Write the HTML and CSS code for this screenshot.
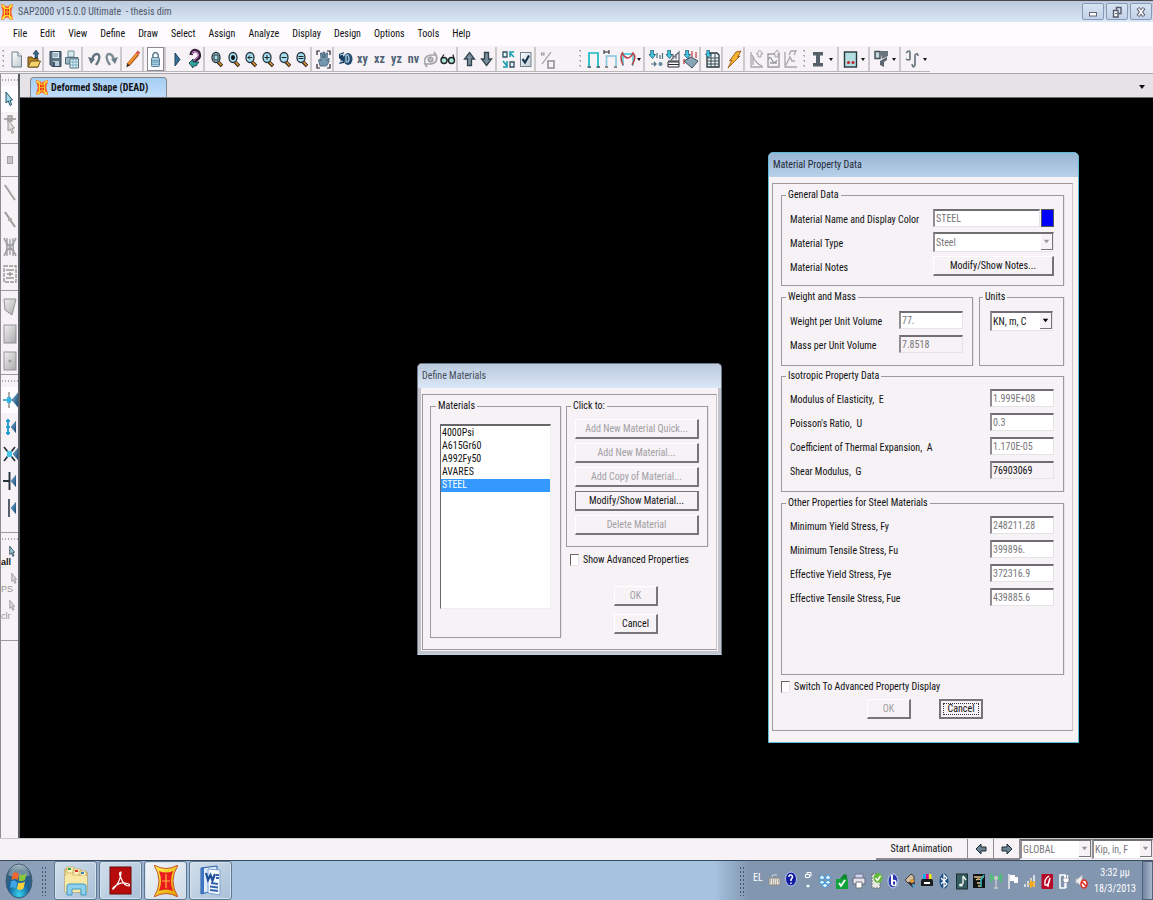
FILE: index.html
```html
<!DOCTYPE html>
<html lang="en">
<head>
<meta charset="utf-8">
<title>SAP2000 v15.0.0 Ultimate - thesis dim</title>
<link rel="stylesheet" href="styles.css">
</head>
<body>
<svg class="defs" aria-hidden="true">
  <defs>
    <linearGradient id="paper" x1="0" y1="0" x2="1" y2="1"><stop offset="0" stop-color="#fff"/><stop offset="1" stop-color="#bcc9cf"/></linearGradient>
    <linearGradient id="blue" x1="0" y1="0" x2="1" y2="1"><stop offset="0" stop-color="#7cb8dc"/><stop offset="1" stop-color="#12446f"/></linearGradient>
    <linearGradient id="grey" x1="0" y1="0" x2="1" y2="1"><stop offset="0" stop-color="#f0eff0"/><stop offset="1" stop-color="#a9a9ab"/></linearGradient>
    <radialGradient id="orb" cx=".5" cy=".9" r=".9"><stop offset="0" stop-color="#35d3f0"/><stop offset=".45" stop-color="#17639a"/><stop offset=".8" stop-color="#3c6079"/><stop offset="1" stop-color="#c5d5dd"/></radialGradient>
    <linearGradient id="gold" x1="0" y1="0" x2="1" y2="1"><stop offset="0" stop-color="#fff74a"/><stop offset="1" stop-color="#e39a00"/></linearGradient>
  </defs>
  <symbol id="sap" viewBox="0 0 24 32" preserveAspectRatio="none">
    <path d="M0 0 Q12 7 24 0 Q14 16 24 32 Q12 25 0 32 Q10 16 0 0Z" fill="url(#gold)" stroke="#c7542a" stroke-width="1"/>
    <path d="M5 6 Q12 9 19 6 Q15 16 19 26 Q12 23 5 26 Q9 16 5 6Z" fill="#e81b1f"/>
    <path d="M12 9V23M8 16H16" stroke="#fdb53e" stroke-width="1.2"/>
  </symbol>
  <symbol id="sap-small" viewBox="0 0 12 16" preserveAspectRatio="none">
    <path d="M0 0L3 1L6 3L9 1L12 0L11 4L10 8L11 12L12 16L9 15L6 13L3 15L0 16L1 12L2 8L1 4Z" fill="#ff5a2c" stroke="#ee7a38" stroke-width=".6"/>
    <path d="M1 1L4 4M11 1L8 4M1 15L4 12M11 15L8 12" stroke="#ffe63a" stroke-width="1.8"/>
    <path d="M3 4H9V12H3Z" fill="#ffd426"/>
    <path d="M4 5H8V11H4Z" fill="#ee2a1a"/>
    <path d="M6 5V11M4 8H8" stroke="#ffc52e" stroke-width=".8"/>
  </symbol>
  <symbol id="mag" viewBox="0 0 17 22">
    <path d="M10 14L14 18" stroke="#20201c" stroke-width="3.4"/><path d="M10.500 14L13.500 17.500" stroke="#e5932c" stroke-width="1.6"/>
    <ellipse cx="8" cy="9.500" rx="4" ry="5" fill="#a5dff0" stroke="#26323d" stroke-width="1.3"/>
  </symbol>
  <symbol id="cur" viewBox="0 0 8 16"><path d="M1 1V12L3.300 10L5 14.500L6.700 13.500L5 9.500L7.500 9Z"/></symbol>
  <symbol id="tri" viewBox="0 0 6 14"><path d="M6 0V14L0 7Z" fill="url(#blue)" stroke="#26567f" stroke-width=".6"/></symbol>
  <symbol id="load" viewBox="0 0 8 10"><path d="M2 0H5V5H7.500L4 9.500L0 5H2Z" fill="#45d0ee" stroke="#174c61" stroke-width=".9"/></symbol>
</svg>

<header class="titlebar">
  <svg class="app-icon"><use href="#sap-small"/></svg>
  <h1>SAP2000 v15.0.0 Ultimate &nbsp;- thesis dim</h1>
  <div class="win-buttons">
    <button aria-label="Minimize"><svg viewBox="0 0 20 14"><rect x="6.500" y="7.500" width="7" height="3.500" fill="#fff" stroke="#64687a"/></svg></button>
    <button aria-label="Restore"><svg viewBox="0 0 20 14"><path d="M9.500 2.500H14V8.500H9.500Z" fill="#dfe5ef" stroke="#555a6b" stroke-width="1.400"/><path d="M6.500 5.500H11V12H6.500Z" fill="#fff" stroke="#555a6b" stroke-width="1.400"/><path d="M8 8.500H10" stroke="#555a6b"/></svg></button>
    <button aria-label="Close"><svg viewBox="0 0 20 14"><path d="M7 3L13 11M13 3L7 11" stroke="#555a6b" stroke-width="3.600"/><path d="M7.500 3.500L12.500 10.500M12.500 3.500L7.500 10.500" stroke="#fff" stroke-width="1.600"/></svg></button>
  </div>
</header>

<nav class="menubar">
  <button>File</button><button>Edit</button><button>View</button><button>Define</button><button>Draw</button><button>Select</button><button>Assign</button><button>Analyze</button><button>Display</button><button>Design</button><button>Options</button><button>Tools</button><button>Help</button>
</nav>

<div class="toolbars">
  <div class="toolbar main-tools" role="toolbar" aria-label="Main">
    <i class="grip"></i>
    <button aria-label="New"><svg viewBox="0 0 17 22"><path d="M4 4H10L13.500 8V19H4Z" fill="url(#paper)" stroke="#6d7f8a"/><path d="M10 4V8H13.500" fill="#fff" stroke="#6d7f8a"/></svg></button>
    <button aria-label="Open"><svg viewBox="0 0 17 22"><path d="M3 19V9H7L8 10.500H13V19Z" fill="#b98422" stroke="#5b4312"/><path d="M3 19L6 13H15.500L13 19Z" fill="#f5d56b" stroke="#6e521a"/><path d="M10 10V6H8L11 2L14 6H12.500V10Z" fill="#35698c" stroke="#173349" stroke-width=".6"/></svg></button>
    <i class="sep"></i>
    <button aria-label="Save"><svg viewBox="0 0 17 22"><path d="M3 3.500H14V18.500H5L3 16.500Z" fill="#5f7383" stroke="#334758"/><path d="M5.500 4H12V10H5.500Z" fill="#dcebf2"/><path d="M6 6H11M6 8H11" stroke="#628499"/><path d="M6 13H12V18H6Z" fill="#bcd0dc"/><path d="M7 14V18" stroke="#223344" stroke-width="1.500"/></svg></button>
    <button aria-label="Print"><svg viewBox="0 0 17 22"><path d="M4 3H10V9H4Z" fill="#d6e9ef" stroke="#71909a"/><path d="M1.500 9.500H14V16H1.500Z" fill="#9ab7c1" stroke="#4f6c78"/><path d="M6 11H14.500V20H6Z" fill="#e6f5fa" stroke="#56727f"/><path d="M6 14H14M6 17H14M9 11V20M12 11V20" stroke="#64a0b8" stroke-width=".8"/></svg></button>
    <i class="sep"></i>
    <button aria-label="Undo"><svg viewBox="0 0 17 22"><path d="M6 13C7 4 15 4 13 11C12.500 14 11 15 10 17" fill="none" stroke="#62747f" stroke-width="2.300"/><path d="M2 9L5 16L9 11Z" fill="#5e717e"/></svg></button>
    <button aria-label="Redo"><svg viewBox="0 0 17 22"><path d="M11 13C10 4 2 4 4 11C4.500 14 6 15 7 17" fill="none" stroke="#7c8d96" stroke-width="2.300"/><path d="M15 9L12 16L8 11Z" fill="#6c7f8a"/></svg></button>
    <i class="sep"></i>
    <button aria-label="Edit"><svg viewBox="0 0 17 22"><path d="M3 17L12.500 6" stroke="#9f4b12" stroke-width="3.600"/><path d="M3.500 16L12.500 5.500" stroke="#f7952d" stroke-width="2.200"/><path d="M12 6L14 3.500" stroke="#d3574d" stroke-width="3.400"/><path d="M1.500 19.500L2 15.500L4.500 17.500Z" fill="#382a1c"/></svg></button>
    <i class="sep"></i>
    <button class="pressed" aria-label="Lock model"><svg viewBox="0 0 17 22"><path d="M5.500 10V6Q8.500 1.500 11.500 6V10" fill="none" stroke="#5c7e94" stroke-width="1.700"/><rect x="4" y="9.500" width="9" height="10" rx="1" fill="#b9dcec" stroke="#47697f"/><path d="M4 12.500H13M4 14.500H13M4 17H13" stroke="#5387a3"/></svg></button>
    <i class="sep"></i>
    <button aria-label="Run"><svg viewBox="0 0 17 22"><path d="M6 5L11 11.500L6 18Z" fill="#3a6d95" stroke="#1c425f"/></svg></button>
    <button aria-label="Refresh"><svg viewBox="0 0 17 22"><path d="M5 7C6 0 14 2 13.500 8C13 12 8 11 7 16" fill="none" stroke="#331b38" stroke-width="3.400"/><path d="M6 6C7 2 12 3 12.500 7C12.500 10 8 11 7 15" fill="none" stroke="#c17cc3" stroke-width="1.200"/><path d="M3 15L7 11V14H13L10 18H7V20Z" fill="#31a7a4" stroke="#0e3337" stroke-width=".8"/></svg></button>
    <i class="sep"></i>
    <button aria-label="Zoom window"><svg viewBox="0 0 17 22"><use href="#mag"/><path d="M6 7H10V12H6Z" fill="none" stroke="#222"/></svg></button>
    <button aria-label="Zoom full"><svg viewBox="0 0 17 22"><use href="#mag"/><ellipse cx="8" cy="9.500" rx="2" ry="2.600" fill="#111"/></svg></button>
    <button aria-label="Zoom previous"><svg viewBox="0 0 17 22"><use href="#mag"/><path d="M10.500 9.500H6M8 7.500L6 9.500L8 11.500" fill="none" stroke="#222"/></svg></button>
    <button aria-label="Zoom in"><svg viewBox="0 0 17 22"><use href="#mag"/><path d="M5.500 9.500H10.500M8 7V12" stroke="#222"/></svg></button>
    <button aria-label="Zoom out"><svg viewBox="0 0 17 22"><use href="#mag"/><path d="M5.500 9.500H10.500" stroke="#222"/></svg></button>
    <button aria-label="Zoom selection"><svg viewBox="0 0 17 22"><use href="#mag"/><path d="M5.500 8.500H10.500M5.500 10.500H10.500" stroke="#222"/></svg></button>
    <i class="sep"></i>
    <button aria-label="Pan"><svg viewBox="0 0 17 22"><path d="M2 7V3H5M12 3H15V7M15 16V20H12M5 20H2V16" fill="none" stroke="#222" stroke-width="1.200"/><path d="M5 18L3.500 12L5 11L6 13L5.500 5L7 5L8 10V4H9.500V10L11 5H12.500L12 13L14 10V14L11.500 18Z" fill="#7597ad" stroke="#405e72" stroke-width=".8"/></svg></button>
    <i class="sep"></i>
    <button aria-label="3D view"><svg viewBox="0 0 17 22"><path d="M2 6L7 4L6 8L9 10L7 15L2 16L4 12L2 10Z" fill="#173c5d"/><ellipse cx="11" cy="11" rx="4.500" ry="6" fill="#1f4c70"/><path d="M9 7H11Q13 11 11 14H9ZM3 7L7 6M3 14L6 13" fill="none" stroke="#bdd8e8" stroke-width="1.200"/></svg></button>
    <button class="word">xy</button><button class="word">xz</button><button class="word">yz</button><button class="word">nv</button>
    <button aria-label="Rotate view"><svg viewBox="0 0 17 22"><path d="M3 16Q1 8 9 7H14L12 4M14 7Q17 15 8 16H3L5 19" fill="none" stroke="#a3a4a6" stroke-width="1.600"/><circle cx="8.500" cy="11.500" r="2.600" fill="#bbb" stroke="#929396"/></svg></button>
    <button aria-label="Perspective"><svg viewBox="0 0 17 22"><circle cx="5" cy="12.500" r="3" fill="#a9e5d9" stroke="#202425" stroke-width="1.400"/><circle cx="12.500" cy="12.500" r="3" fill="#a9e5d9" stroke="#202425" stroke-width="1.400"/><path d="M2 11L5 6.500M15 11L14 6.500M8 12H9.500" stroke="#202425" stroke-width="1.200"/></svg></button>
    <i class="sep"></i>
    <button aria-label="Move up"><svg viewBox="0 0 17 22"><path d="M8.500 4.500L13.500 11H10.500V17.500H6.500V11H3.500Z" fill="#7c8e9a" stroke="#344552" stroke-width="1.300"/></svg></button>
    <button aria-label="Move down"><svg viewBox="0 0 17 22"><path d="M8.500 17.500L13.500 11H10.500V4.500H6.500V11H3.500Z" fill="#7c8e9a" stroke="#344552" stroke-width="1.300"/></svg></button>
    <i class="sep"></i>
    <button aria-label="Shrink objects"><svg viewBox="0 0 17 22"><path d="M3 4H7V9H3ZM10 14H14V19H10Z" fill="#e7f6fb" stroke="#33505e" stroke-width="1.300"/><path d="M14 9L10 5M10 9V4H14M3 13L7 18M7 13V19H3" fill="none" stroke="#109cae" stroke-width="1.500"/></svg></button>
    <button aria-label="Display options"><svg viewBox="0 0 17 22"><rect x="3.500" y="4.500" width="10.500" height="14" fill="url(#paper)" stroke="#71838f"/><path d="M5.500 11L8 14.500L12 7.500" fill="none" stroke="#16374f" stroke-width="2.200"/></svg></button>
    <i class="sep"></i>
    <button aria-label="Assign to group"><svg viewBox="0 0 17 22"><path d="M3 16L12 4M2.500 5H5V7H2.500Z" fill="none" stroke="#999a9c" stroke-width="1.200"/><rect x="9" y="13" width="6" height="7" fill="none" stroke="#8d8e91" stroke-width="1.500"/></svg></button>
  </div>
  <div class="toolbar display-tools" role="toolbar" aria-label="Display">
    <i class="grip"></i>
    <button aria-label="Undeformed shape"><svg viewBox="0 0 17 22"><path d="M4 18V5H13V18" fill="none" stroke="#16b9c4" stroke-width="1.700"/><path d="M2.500 19H6M11.500 19H15" stroke="#27535b" stroke-width="1.500"/></svg></button>
    <button aria-label="Load assigns"><svg viewBox="0 0 17 22"><path d="M4.500 18V8H14V18" fill="none" stroke="#84c6dc" stroke-width="1.600"/><path d="M2 2V6M7 2V6M2 4H7M3 19H6M12 19H15" stroke="#222"/></svg></button>
    <button aria-label="Deformed shape" class="drop"><svg viewBox="0 0 24 22"><path d="M4 18V6H14V18" fill="none" stroke="#2bc8d5" stroke-width="1.300"/><path d="M4 4Q0 8 4 17M3 5Q9 15 14 5Q18 9 13 17" fill="none" stroke="#bd4047" stroke-width="1.600"/><path d="M18 10H22L20 13Z" fill="#111"/></svg></button>
    <i class="sep"></i>
    <button aria-label="Show forces"><svg viewBox="0 0 17 22"><use href="#load" x="1" y="2" width="7" height="9"/><path d="M9 5V10M12 7V11M14.500 5V11M3 16H8M6 14L8 16L6 18" stroke="#4b7180" stroke-width="1.200" fill="none"/><circle cx="12.500" cy="16" r="2" fill="#5f8ba6"/></svg></button>
    <button aria-label="Show stresses"><svg viewBox="0 0 17 22"><path d="M6 12L14 4V13H3M8 11V6M11 11V6" fill="none" stroke="#666f76" stroke-width="1.300"/><path d="M3 14H14V19H3ZM3 16.500H14" fill="#fff" stroke="#272b2e"/><use href="#load" x="1" y="2" width="7" height="9"/></svg></button>
    <button aria-label="Surface loads"><svg viewBox="0 0 17 22"><path d="M2 13L9 9L16 13L10 20Z" fill="#88a6b8" stroke="#394f5d"/><path d="M10 3V9M14 4V10M2 11V16" stroke="#bb3a40" stroke-width="1.200"/><use href="#load" x="2" y="2" width="7" height="9"/></svg></button>
    <i class="sep"></i>
    <button aria-label="Show tables"><svg viewBox="0 0 17 22"><path d="M3 8L6 5H13L15 7V19H3Z" fill="#e8f4f6" stroke="#27343d" stroke-width="1.300"/><path d="M3 10H15M3 13H15M3 16H15M7 6V19M11 6V19" stroke="#3b4a53"/><use href="#load" x="1" y="2" width="7" height="8"/></svg></button>
    <i class="sep"></i>
    <button aria-label="Run analysis"><svg viewBox="0 0 17 22"><path d="M10 4L15 3L11.500 9L14 8L2 20L6 12L3.500 13Z" fill="#f7b42f" stroke="#9b5817" stroke-width=".9"/></svg></button>
    <i class="sep"></i>
    <button aria-label="Response plot"><svg viewBox="0 0 17 22"><path d="M3 4V19H15M4 7Q8 16 14 18M5 9V17" fill="none" stroke="#a5a6a8" stroke-width="1.300"/><path d="M10 9V6H8.500L11.500 2L15 6H13V9Z" fill="#eee" stroke="#a5a6a8"/></svg></button>
    <button aria-label="Function plot"><svg viewBox="0 0 17 22"><path d="M3 6H14V19H3ZM3 12Q5 7 7 12T12 12M5 15H12" fill="none" stroke="#9c9da0" stroke-width="1.400"/><path d="M10 9V6H9L12 2L15 6H13V9Z" fill="#eee" stroke="#a5a6a8"/></svg></button>
    <button aria-label="Spectrum plot"><svg viewBox="0 0 17 22"><path d="M3 4V19H15M4 17L8 9L10 13L13 13M7 7L9 3H14L12 7" fill="none" stroke="#a5a6a8" stroke-width="1.300"/></svg></button>
  </div>
  <div class="toolbar design-tools" role="toolbar" aria-label="Design">
    <i class="grip"></i>
    <button aria-label="Steel frame design" class="wide"><svg viewBox="0 0 26 22"><path d="M2 4H12V7.500H9V15H12V18.500H2V15H5V7.500H2Z" fill="#56606a"/><path d="M18 10H22L20 13Z" fill="#111"/></svg></button>
    <i class="sep"></i>
    <button aria-label="Concrete frame design" class="wide"><svg viewBox="0 0 26 22"><rect x="2.500" y="4" width="12" height="15" fill="#b4dfe0" stroke="#24373d" stroke-width="1.400"/><circle cx="6.500" cy="14.500" r="1.600" fill="#c02832"/><circle cx="11" cy="14.500" r="1.600" fill="#c02832"/><path d="M19 10H23L21 13Z" fill="#111"/></svg></button>
    <i class="sep"></i>
    <button aria-label="Aluminium frame design" class="wide"><svg viewBox="0 0 26 22"><path d="M2 3.500H7V10.500H2Z" fill="#c5d4dd" stroke="#47515a" stroke-width="1.500"/><path d="M7 3H15V8L9 11Z" fill="#6b747d"/><path d="M7 13L14 9V12L11 14V19L7 17Z" fill="#5d6670"/><path d="M19 10H23L21 13Z" fill="#111"/></svg></button>
    <i class="sep"></i>
    <button aria-label="Cold formed design" class="wide"><svg viewBox="0 0 26 22"><path d="M2 5Q6 1 6 5V11Q5 13 2 11M14 8Q14 4 11 7V17Q9 21 8 16" fill="none" stroke="#6c7680" stroke-width="1.700"/><path d="M19 10H23L21 13Z" fill="#111"/></svg></button>
  </div>
</div>

<main class="workspace">
  <aside class="sidebar" aria-label="Draw and snap tools">
    <i class="side-grip"></i>
    <div class="tools pointers">
      <button class="pressed" aria-label="Select"><svg viewBox="0 0 16 24"><use href="#cur" x="3" y="4" width="8" height="16" fill="#a1d7e6" stroke="#275069"/></svg></button>
      <button aria-label="Reshape"><svg viewBox="0 0 16 24"><path d="M2 6H14M6 3H10V8H6Z" fill="#ccc" stroke="#999" stroke-width="1.300"/><use href="#cur" x="5" y="6" width="8" height="16" fill="#ddd" stroke="#999"/></svg></button>
    </div>
    <div class="tools joints"><button aria-label="Draw joint"><svg viewBox="0 0 16 24"><rect x="5.500" y="8.500" width="5" height="7" fill="#c6c6c8" stroke="#a0a0a2"/></svg></button></div>
    <div class="tools spread">
      <button aria-label="Draw frame"><svg viewBox="0 0 16 24"><path d="M3 4L13 19" stroke="#999" stroke-width="2.200"/><path d="M4 4L14 19" stroke="#ddd"/></svg></button>
      <button aria-label="Quick frame"><svg viewBox="0 0 16 24"><path d="M3 4L13 19" stroke="#999" stroke-width="2"/><circle cx="8" cy="11.500" r="2" fill="#aaa"/></svg></button>
      <button aria-label="Quick braces"><svg viewBox="0 0 16 24"><path d="M2 4L14 20M14 4L2 20M5 3V21M11 3V21M2 3Q8 12 2 21M14 3Q8 12 14 21M8 4V20" fill="none" stroke="#a0a0a2" stroke-width="1.400"/></svg></button>
      <button aria-label="Secondary beams"><svg viewBox="0 0 16 24"><rect x="2" y="4" width="12" height="16" fill="none" stroke="#999" stroke-width="1.400" stroke-dasharray="4 1"/><path d="M4 8H12M4 16H12M5 12H11M8 10V14" stroke="#999" stroke-width="1.500"/></svg></button>
    </div>
    <div class="tools spread areas">
      <button aria-label="Draw area"><svg viewBox="0 0 16 24"><path d="M2 4H14L10 20L3 15Z" fill="url(#grey)" stroke="#939395"/></svg></button>
      <button aria-label="Rectangular area"><svg viewBox="0 0 16 24"><rect x="2" y="3" width="12" height="18" fill="url(#grey)" stroke="#939395"/></svg></button>
      <button aria-label="Quick area"><svg viewBox="0 0 16 24"><rect x="2" y="3" width="12" height="18" fill="url(#grey)" stroke="#939395"/><circle cx="8" cy="12" r="1.500" fill="#999"/></svg></button>
    </div>
    <i class="side-grip"></i>
    <div class="tools spread snaps">
      <button class="pressed" aria-label="Snap joints"><svg viewBox="0 0 16 24"><path d="M7 4V20" stroke="#aaa" stroke-width="2"/><path d="M1 12H10" stroke="#218fc1" stroke-width="1.500"/><rect x="5" y="9" width="4" height="6" fill="#35b5e5"/><use href="#tri" x="10" y="5" width="6" height="14"/></svg></button>
      <button aria-label="Snap ends"><svg viewBox="0 0 16 24"><path d="M6 4V20M4 6H8M4 12H8M4 18H8" stroke="#299ed0" stroke-width="2"/><use href="#tri" x="9" y="5" width="5" height="14"/></svg></button>
      <button aria-label="Snap intersections"><svg viewBox="0 0 16 24"><path d="M2 5L13 19M13 5L2 19" stroke="#26333b" stroke-width="1.700"/><rect x="5" y="9" width="5" height="6" fill="#46c5ea"/><use href="#tri" x="11" y="6" width="5" height="12"/></svg></button>
      <button aria-label="Snap perpendicular"><svg viewBox="0 0 16 24"><path d="M1 12H8M7.500 3V21" stroke="#26333b" stroke-width="1.900"/><use href="#tri" x="9" y="5" width="5" height="14"/></svg></button>
      <button aria-label="Snap lines"><svg viewBox="0 0 16 24"><path d="M7 3V21" stroke="#59606b" stroke-width="2"/><use href="#tri" x="9" y="5" width="5" height="14"/></svg></button>
    </div>
    <i class="side-grip lower"></i>
    <div class="tools spread selects">
      <button class="pick strong">all<svg><use href="#cur" fill="#9ec9d9" stroke="#1b3344"/></svg></button>
      <button class="pick dim">PS<svg><use href="#cur" fill="#d6d6d8" stroke="#929294"/></svg></button>
      <button class="pick dim">clr<svg><use href="#cur" fill="#d6d6d8" stroke="#929294"/></svg></button>
    </div>
  </aside>

  <section class="view">
    <div class="tabs">
      <button class="tab"><svg><use href="#sap-small"/></svg>Deformed Shape (DEAD)</button>
      <button class="tab-menu" aria-label="Windows"><svg viewBox="0 0 8 6"><path d="M1 1H7L4 5Z" fill="#111"/></svg></button>
    </div>

    <div class="canvas">
      <form class="dialog define">
        <h2>Define Materials</h2>
        <div class="dialog-body">
          <div class="panel">
            <fieldset class="materials">
              <legend>Materials</legend>
              <select size="14" aria-label="Materials">
                <option>4000Psi</option><option>A615Gr60</option><option>A992Fy50</option><option>AVARES</option><option class="chosen">STEEL</option>
              </select>
            </fieldset>
            <div class="actions">
              <fieldset>
                <legend>Click to:</legend>
                <button type="button" disabled>Add New Material Quick...</button>
                <button type="button" disabled>Add New Material...</button>
                <button type="button" disabled>Add Copy of Material...</button>
                <button type="button" class="default">Modify/Show Material...</button>
                <button type="button" disabled>Delete Material</button>
              </fieldset>
              <label class="check"><input type="checkbox">Show Advanced Properties</label>
              <div class="confirm">
                <button type="button" disabled>OK</button>
                <button type="button">Cancel</button>
              </div>
            </div>
          </div>
        </div>
      </form>

      <form class="dialog property">
        <h2>Material Property Data</h2>
        <div class="dialog-body">
          <div class="panel">
            <fieldset class="general">
              <legend>General Data</legend>
              <div class="row"><label for="name">Material Name and Display Color</label><span class="name-field"><input id="name" value="STEEL" disabled><button type="button" class="swatch" aria-label="Display color"></button></span></div>
              <div class="row"><label for="type">Material Type</label><span class="combo off"><select id="type" disabled><option>Steel</option></select><svg viewBox="0 0 12 16"><path d="M3 6H9L6 10Z"/></svg></span></div>
              <div class="row"><span>Material Notes</span><button type="button">Modify/Show Notes...</button></div>
            </fieldset>
            <div class="pair">
              <fieldset class="weight">
                <legend>Weight and Mass</legend>
                <div class="row"><label for="w">Weight per Unit Volume</label><input id="w" value="77." disabled></div>
                <div class="row"><label for="m">Mass per Unit Volume</label><input id="m" class="flat" value="7.8518" disabled></div>
              </fieldset>
              <fieldset class="units">
                <legend>Units</legend>
                <span class="combo"><select aria-label="Units"><option>KN, m, C</option></select><svg viewBox="0 0 12 16"><path d="M3 6H9L6 10Z"/></svg></span>
              </fieldset>
            </div>
            <fieldset class="isotropic">
              <legend>Isotropic Property Data</legend>
              <div class="row"><label for="e">Modulus of Elasticity, &nbsp;E</label><input id="e" value="1.999E+08" disabled></div>
              <div class="row"><label for="u">Poisson's Ratio, &nbsp;U</label><input id="u" value="0.3" disabled></div>
              <div class="row"><label for="a">Coefficient of Thermal Expansion, &nbsp;A</label><input id="a" value="1.170E-05" disabled></div>
              <div class="row"><label for="g">Shear Modulus, &nbsp;G</label><input id="g" class="flat" value="76903069" readonly></div>
            </fieldset>
            <fieldset class="other">
              <legend>Other Properties for Steel Materials</legend>
              <div class="row"><label for="fy">Minimum Yield Stress, Fy</label><input id="fy" value="248211.28" disabled></div>
              <div class="row"><label for="fu">Minimum Tensile Stress, Fu</label><input id="fu" value="399896." disabled></div>
              <div class="row"><label for="fye">Effective Yield Stress, Fye</label><input id="fye" value="372316.9" disabled></div>
              <div class="row"><label for="fue">Effective Tensile Stress, Fue</label><input id="fue" value="439885.6" disabled></div>
            </fieldset>
            <label class="check"><input type="checkbox">Switch To Advanced Property Display</label>
            <div class="confirm">
              <button type="button" disabled>OK</button>
              <button type="button" class="default focus">Cancel</button>
            </div>
          </div>
        </div>
      </form>
    </div>
  </section>
</main>

<div class="statusbar">
  <button class="animate">Start Animation</button>
  <button aria-label="Previous"><svg viewBox="0 0 14 16"><path d="M2 8L7 3V6H12V10H7V13Z" fill="#6d8290" stroke="#1d2b36"/></svg></button>
  <button aria-label="Next"><svg viewBox="0 0 14 16"><path d="M12 8L7 3V6H2V10H7V13Z" fill="#6d8290" stroke="#1d2b36"/></svg></button>
  <span class="combo off coords"><select aria-label="Coordinate system" disabled><option>GLOBAL</option></select><svg viewBox="0 0 12 16"><path d="M3 6H9L6 10Z"/></svg></span>
  <span class="combo off unitbox"><select aria-label="Units" disabled><option>Kip, in, F</option></select><svg viewBox="0 0 12 16"><path d="M3 6H9L6 10Z"/></svg></span>
</div>

<footer class="taskbar">
  <button class="start" aria-label="Start"><svg viewBox="0 0 28 36"><ellipse cx="14" cy="18" rx="13" ry="17" fill="url(#orb)" stroke="#3d5a70"/><path d="M3 12Q14 -4 25 12Q14 17 3 12Z" fill="#dfe9ee" opacity=".35"/><path d="M8 10Q11 8 14 11L12.500 17Q10 15 6.500 17Z" fill="#f0662c"/><path d="M15 11Q18 13 21.500 10.500L20 17Q17 19 13.500 17.500Z" fill="#8cc63e"/><path d="M6 18.500Q9 16.500 12 19L11 25.500Q8 23.500 5 25Z" fill="#41a6e8"/><path d="M13.300 19.500Q16 21 20 18.500L18.500 25.500Q15 28 12 26Z" fill="#fdce3c"/></svg></button>
  <i class="dots"></i>
  <div class="tasks">
    <button aria-label="Explorer"><svg viewBox="0 0 28 34"><path d="M3 5H11L12 8H25V28H3Z" fill="#f7e6a0" stroke="#bb9a46"/><path d="M5 3H12V9H5ZM11 5H19V11H11ZM17 7H24V12H17Z" fill="#fff3bd" stroke="#c3a759" stroke-width=".7"/><rect x="6" y="4" width="3" height="2" fill="#33a74a"/><rect x="13" y="6" width="3" height="2" fill="#da3b2d"/><rect x="19" y="8" width="3" height="2" fill="#2d85c7"/><path d="M3 12H25V28H3Z" fill="#f8e8a6"/><path d="M5 31V22Q5 20 8 20H21Q24 20 24 22V31H19V25H10V31Z" fill="#8ed1ef" stroke="#3f97be"/></svg></button>
    <button aria-label="Adobe Reader"><svg viewBox="0 0 28 34"><rect x="3" y="3" width="21" height="27" fill="#b80c0c" stroke="#6b0606"/><path d="M14 8Q11 8 14 14Q17 22 22 22Q24 20 18 19Q12 18 6 24Q5 27 9 22Q14 15 14 8Z" fill="none" stroke="#fff" stroke-width="1.200"/></svg></button>
    <button class="active" aria-label="SAP2000"><svg><use href="#sap"/></svg></button>
    <button aria-label="Word"><svg viewBox="0 0 28 34"><path d="M4 4L20 2V26L4 30Z" fill="#dfeaf8" stroke="#285aa5"/><path d="M4 4L7 3.500V29L4 30Z" fill="#3b75c3"/><path d="M11 5L23 6V31L11 29Z" fill="#f6faff" stroke="#7da0cd"/><path d="M14 19L21 20M13 22.500L21 23.500M13 26L21 27M19 11H22M19 14H22" stroke="#3465ac" stroke-width="2"/><path d="M9 9L11 16L13.500 11L15.500 16.500L18 10" fill="none" stroke="#1f4e9c" stroke-width="2.200"/></svg></button>
  </div>
  <i class="dots tray-dots"></i>
  <span class="lang">EL</span>
  <div class="tray">
    <svg viewBox="0 0 14 20"><path d="M5 6Q5 3 10 4" fill="none" stroke="#ddd"/><rect x="2" y="7" width="11" height="7" rx="1" fill="#e5e0da" stroke="#8a8681"/><path d="M3 9H12M3 11H12M5 13H10" stroke="#8a8681" stroke-dasharray="1 1"/></svg>
    <svg viewBox="0 0 14 20"><ellipse cx="7" cy="8" rx="5.500" ry="7" fill="#101ba0" stroke="#b2c3ef"/><path d="M5 6Q5 3.500 7 4Q10 5 7 8.500V10M7 11.500V13" fill="none" stroke="#fff" stroke-width="1.500"/></svg>
    <svg viewBox="0 0 14 20"><path d="M4.500 3.500H8.500V6.500H4.500ZM6 3V1.500H10V5H9" fill="none" stroke="#fff"/><path d="M5 14H9L7 17Z" fill="#fff"/></svg>
    <svg viewBox="0 0 14 20"><path d="M4 3.500L7 7L4 9L1 7ZM10 3.500L13 7L10 9L7 7ZM4 9L7 11.500L4 13.500L1 11.500ZM10 9L13 11.500L10 13.500L7 11.500ZM7 12L10 14.500L7 17L4 14.500Z" fill="#d3f1ff" stroke="#2f8cd6" stroke-width=".8"/></svg>
    <svg viewBox="0 0 14 20"><path d="M1 8H13V18H1Z" fill="#13a33a"/><path d="M5 8L9 3L12 4V8Z" fill="#0c8b2e"/><path d="M4 12L6 15L10 9" fill="none" stroke="#fff" stroke-width="1.800"/></svg>
    <svg viewBox="0 0 14 20"><path d="M3 3H11V8H3Z" fill="#cfd3ea" stroke="#73759a"/><path d="M1 7H13V13H1Z" fill="#e6e4ef" stroke="#656478"/><path d="M4 11H10V17H4Z" fill="#fff" stroke="#777"/></svg>
    <svg viewBox="0 0 14 20"><path d="M3 3H11V17H3Z" fill="#e7e8e2" stroke="#6c6d68" stroke-dasharray="2 1"/><ellipse cx="9" cy="7" rx="4.500" ry="5" fill="#65ba3c"/><path d="M6.500 7L8.500 9.500L11.500 5" fill="none" stroke="#fff" stroke-width="1.400"/></svg>
    <svg viewBox="0 0 14 20"><ellipse cx="7" cy="10" rx="5" ry="7" fill="#2b36ae" stroke="#c4d4ef"/><path d="M6 4V14" stroke="#fff" stroke-width="2"/><ellipse cx="8" cy="12" rx="2" ry="2.600" fill="none" stroke="#fff" stroke-width="1.500"/></svg>
    <svg viewBox="0 0 14 20"><path d="M2 9L8 3L11 5V10L5 12Z" fill="#cdbda5" stroke="#463b35"/><path d="M5 12L10 8L12 12L10 17Z" fill="#3a3130"/><circle cx="9" cy="10" r="2" fill="#e69b35"/><path d="M10 13L11 17" stroke="#4fa2d0" stroke-width="2"/></svg>
    <svg viewBox="0 0 14 20"><path d="M3 3H5.500V9H3Z" fill="#00aeef"/><path d="M6 3H8.500V9H6Z" fill="#ec008c"/><path d="M9 3H11.500V9H9Z" fill="#ffed00"/><path d="M2 8H12L13 10V15H1V10Z" fill="#1b1c20"/><path d="M4 11H10V13H4Z" fill="#fff"/></svg>
    <svg viewBox="0 0 14 20"><ellipse cx="7" cy="10" rx="4.500" ry="7.500" fill="#184d86"/><path d="M4 7L10 13L7 16V4L10 7L4 13" fill="none" stroke="#fff" stroke-width="1.200"/></svg>
    <svg viewBox="0 0 14 20"><rect x="1.500" y="3" width="11" height="15" fill="#365d61" stroke="#183034"/><path d="M8 5V13M8 5L11 9" stroke="#eef3ee" stroke-width="1.400"/><ellipse cx="6" cy="14" rx="2" ry="1.600" fill="#eef3ee"/></svg>
    <svg viewBox="0 0 14 20"><rect x="1" y="3" width="12" height="14" fill="#101313"/><path d="M2 6H12M4 9Q7 7 9 9M5 12H9M6 15H9" fill="none" stroke="#e0c58a" stroke-width="1.400"/><path d="M12 4L9 9V16" fill="none" stroke="#28b6bf" stroke-width="1.500"/></svg>
    <svg viewBox="0 0 14 20"><path d="M3 3Q0 7 3 11M11 3Q14 7 11 11M5 5Q3 7 5 9M9 5Q11 7 9 9" fill="none" stroke="#3ccf62" stroke-width="1.300"/><circle cx="7" cy="7" r="2" fill="#ccc"/><path d="M7 8V17M5 17H9" stroke="#ccc" stroke-width="1.300"/></svg>
    <svg viewBox="0 0 14 20"><path d="M3 3V18" stroke="#eee" stroke-width="1.500"/><path d="M4 4H9V6H12V12H8V10H4Z" fill="#fff"/></svg>
    <svg viewBox="0 0 14 20"><path d="M2 16V13M5 16V10M8 16V7M11 16V4" stroke="#d4dce4" stroke-width="2"/><path d="M8 8L9.500 11L12.500 10L11 13L13 16L9.500 15L7 18L7 14L4 13L7 12Z" fill="#f6a81d"/></svg>
    <svg viewBox="0 0 14 20"><rect x="1.500" y="3" width="11.500" height="15" rx="1" fill="#b70925"/><path d="M9 5Q4 8 5 14Q9 15 10 7Q8 13 8 16" fill="none" stroke="#fff" stroke-width="1.400"/></svg>
    <svg viewBox="0 0 14 20"><path d="M3 4H8V17H3Z" fill="none" stroke="#fff" stroke-width="1.500"/><path d="M6 7H12V10Q11 12 9 12Q7 12 6 10Z" fill="#fff" stroke="#555f6e" stroke-width=".6"/><path d="M8 4V7M10.500 4V7M9 12V17" stroke="#fff" stroke-width="1.300"/></svg>
    <svg viewBox="0 0 14 20"><path d="M2 8H4L8 4V16L4 12H2Z" fill="#eee" stroke="#bbb"/><ellipse cx="10" cy="13" rx="3" ry="4" fill="#fff" stroke="#df2d24" stroke-width="1.600"/><path d="M8 10.500L12 15.500" stroke="#df2d24" stroke-width="1.500"/></svg>
  </div>
  <time class="clock"><span>3:32 μμ</span><span>18/3/2013</span></time>
  <button class="show-desktop" aria-label="Show desktop"></button>
</footer>
</body>
</html>
```
FILE: styles.css
```css
:root {
  --face: #f6f2f6;
  --line: #9c9a9e;
  --narrow: "Roboto Condensed", "Liberation Sans Narrow", "Liberation Sans", sans-serif;
}
* { box-sizing: border-box; }
body {
  display: flex;
  flex-direction: column;
  min-height: 100vh;
  margin: 0;
  background: var(--face);
  color: #111;
  font: 10px/12px var(--narrow);
}
button, input, select { font: inherit; color: inherit; }
button { padding: 0; border: 0; background: none; white-space: nowrap; }
svg { display: block; flex: none; }
.defs { position: absolute; width: 0; height: 0; }

/* Title and menu */
.titlebar {
  display: flex;
  align-items: center;
  gap: 5px;
  height: 22px;
  padding-left: 1px;
  border-top: 1px solid #4a4a4c;
  background: linear-gradient(#bac9dd, #dae7f6);
  color: #50586a;
}
.titlebar h1 { flex: 1; margin: 0; font-size: 10px; font-weight: normal; }
.app-icon { width: 12px; height: 16px; }
.win-buttons { display: flex; gap: 2px; padding-right: 1px; }
.win-buttons button {
  width: 22px;
  height: 17px;
  border: 1px solid #8798b8;
  border-radius: 2px;
  background: linear-gradient(#d8e4f2, #c2d2e7);
}
.win-buttons svg { width: 20px; height: 14px; }
.menubar {
  display: flex;
  gap: 13px;
  height: 24px;
  padding-left: 13px;
  background: #fefcff;
}

/* Toolbars */
.toolbars { display: flex; height: 28px; border-bottom: 1px solid #a9a7aa; }
.toolbar { display: flex; align-items: center; height: 26px; border-bottom: 1px solid #b8b6ba; }
.main-tools { width: 577px; }
.display-tools { padding-right: 2px; }
.toolbar button { flex: none; width: 17px; height: 24px; }
.toolbar button.drop { width: 24px; }
.toolbar button.wide { width: 26px; }
.toolbar svg { width: 17px; height: 22px; }
.toolbar .drop svg { width: 24px; }
.toolbar .wide svg { width: 26px; }
.toolbar .word { color: #4e6374; font: bold 12px/20px var(--narrow); }
.toolbar .pressed { border: 1px solid #8a8a90; background: #fdfcfe; }
.toolbar .pressed svg { width: 15px; }
.grip { width: 8px; height: 22px; background: radial-gradient(circle, #aaa 1px, transparent 1px) 0 0 / 7px 5px; }
.sep { width: 5px; height: 24px; border-left: 2px solid #cbc9cc; border-right: 2px solid var(--face); }
.design-tools .grip { margin-right: 2px; }

/* Sidebar */
.workspace { display: flex; flex: 1; }
.sidebar {
  display: flex;
  flex-direction: column;
  width: 20px;
  border-left: 1px solid #8e8c90;
  border-right: 2px solid #555c62;
}
.side-grip { height: 12px; background: radial-gradient(circle, #aaa 1px, transparent 1px) 0 0 / 3px 12px; }
.side-grip.lower { height: 10px; margin-top: 8px; border-top: 1px solid var(--line); }
.tools {
  display: flex;
  flex-direction: column;
  align-items: center;
  padding: 3px 0;
  border-bottom: 1px solid var(--line);
}
.tools button { width: 17px; height: 26px; }
.tools.pointers { padding: 0 0 5px; }
.tools.joints { padding: 3px 0; }
.tools.spread { gap: 1px; }
.tools.areas { padding-bottom: 0; }
.tools.snaps { padding-top: 0; border-bottom: 0; }
.tools.selects { padding: 0 0 18px; }
.tools svg { width: 16px; height: 24px; margin: auto; }
.tools .pressed { background: #fffdff; }
.tools .pick { display: flex; align-items: flex-end; font: 9px/11px "Liberation Sans", sans-serif; }
.tools .strong { font-weight: bold; }
.tools .pick svg { width: 6px; height: 15px; margin: 0 0 9px -2px; }
.dim { color: #969698; }

/* Document view */
.view { display: flex; flex: 1; flex-direction: column; min-width: 0; }
.tabs {
  display: flex;
  justify-content: space-between;
  height: 24px;
  padding: 3px 7px 0 10px;
  border-bottom: 1px solid #6e6c70;
  background: #e6e3e7;
}
.tab {
  display: flex;
  align-items: center;
  gap: 3px;
  width: 137px;
  padding-left: 5px;
  border: 1px solid #85898f;
  border-bottom: 0;
  border-radius: 4px 4px 0 0;
  background: linear-gradient(#a5cff5, #c1ddfb);
  color: #111;
  font-weight: bold;
}
.tab svg { width: 12px; height: 15px; }
.tab-menu svg { width: 8px; height: 6px; }
.canvas { position: relative; flex: 1; background: #000; }

/* Dialogs */
.dialog {
  position: absolute;
  border: 1px solid #6f7b85;
  border-radius: 5px 5px 0 0;
  background: var(--face);
}
.define { left: 397px; top: 265px; width: 305px; border-bottom-color: #bdd5e8; }
.property { left: 748px; top: 54px; width: 311px; border-color: #5fb9da; }
.dialog h2 {
  height: 24px;
  margin: 0;
  padding: 0 4px;
  border-radius: 4px 4px 0 0;
  background: linear-gradient(#bac9dd, #dae7f6);
  color: #454f5c;
  font-size: 10px;
  font-weight: normal;
  line-height: 24px;
}
.property h2 { background: linear-gradient(#98b4d4, #b9d1ea); color: #222a35; }
.define .dialog-body { padding: 6px 1px 1px; border: 3px solid #c4c5cc; border-top: 0; }
.property .dialog-body { padding: 6px 5px 11px 3px; }
.panel { border: 1px solid var(--line); border-right-color: #c8c6ca; }
.define .panel { display: flex; gap: 5px; padding: 5px 7px 11px; }
.property .panel { padding: 5px 8px 11px; }

fieldset { min-width: 0; margin: 0; padding: 0; border: 1px solid var(--line); box-shadow: 1px 0 0 #e4e2e6; }
legend { height: 12px; margin-left: -4px; padding: 0 2px; }
.materials { flex: none; width: 131px; padding: 12px 9px 28px; }
.materials select {
  display: block;
  width: 100%;
  height: 185px;
  padding: 1px 0;
  border: 1px solid #eee;
  border-top: 2px solid #69666b;
  border-left-color: #69666b;
  border-radius: 0;
  background: #fff;
  overflow: hidden;
}
.materials option { min-height: 13px; padding: 0 1px; line-height: 13px; }
.chosen { background: #3399ff; color: #fff; }
.actions { width: 142px; }
.actions fieldset { display: flex; flex-direction: column; gap: 4px; padding: 7px 8px 11px; }

.dialog button {
  height: 20px;
  border: 1px solid #fff;
  border-right: 2px solid #77757a;
  border-bottom: 2px solid #77757a;
  background: var(--face);
}
.dialog button:disabled { color: #a2a0a4; }
.dialog button.default { border-top-color: #77757a; border-left-color: #77757a; }
.dialog button.focus { outline: 1px dotted #333; outline-offset: -5px; border-width: 2px; }
.check { display: flex; align-items: center; gap: 4px; height: 12px; }
.check input {
  width: 9px;
  height: 12px;
  margin: 0;
  border: 1px solid #e8e6ea;
  border-top-color: #666;
  border-left-color: #666;
  background: #fff;
  appearance: none;
}
.define .check { margin: 7px 0 20px 4px; }
.confirm { display: flex; }
.confirm button { width: 44px; }
.define .confirm { flex-direction: column; gap: 8px; margin-left: 48px; }
.property .confirm { gap: 28px; margin-left: 86px; }
.property .check { margin: 6px 0; }

.row { display: flex; align-items: center; justify-content: space-between; height: 24px; }
.row label, .row > span:first-child { padding-top: 3px; }
.row input, .combo select {
  width: 64px;
  height: 18px;
  padding: 0 1px;
  border: 1px solid #e5e3e7;
  border-top: 2px solid #706e72;
  border-left: 2px solid #8f8d91;
  border-radius: 0;
  background: #fff;
  color: #111;
  opacity: 1;
  appearance: none;
}
.row input:disabled, .combo select:disabled { color: #79777b; }
.row input.flat { background: var(--face); }
.general .row > button, .general .combo, .name-field { width: 121px; }
.general .row > button { flex: none; }
.name-field { display: flex; gap: 1px; }
.row .name-field input { flex: 1; min-width: 0; }
.dialog .swatch { width: 13px; height: 18px; border: 1px solid #555; background: #0000fa; }
.combo { position: relative; display: block; }
.combo select { width: 100%; height: 20px; }
.combo svg {
  position: absolute;
  top: 2px;
  right: 1px;
  width: 12px;
  height: 16px;
  border-right: 1px solid #77757a;
  border-bottom: 1px solid #77757a;
  background: var(--face);
  fill: #000;
  pointer-events: none;
}
.combo.off svg { fill: #9a989c; }
.general { padding: 5px 9px 7px 8px; }
.pair { display: flex; gap: 6px; margin-top: 5px; }
.weight { flex: none; width: 192px; padding: 5px 9px 9px 8px; }
.units { flex: 1; padding: 8px 10px; }
.units legend { margin-left: -7px; }
.isotropic { margin-top: 4px; padding: 4px 9px 9px 8px; }
.other { min-height: 178px; margin-top: 5px; padding: 4px 9px 7px 8px; }

/* Status bar */
.statusbar { display: flex; justify-content: flex-end; height: 22px; border-top: 1px solid #c9c6ca; }
.statusbar button {
  width: 26px;
  border-right: 1px solid #8d8b8f;
  border-bottom: 2px solid #8d8b8f;
}
.statusbar .animate { width: 92px; }
.statusbar button svg { width: 14px; height: 16px; margin: auto; }
.statusbar .combo { color: #777; }
.coords { width: 72px; }
.unitbox { width: 61px; }

/* Taskbar */
.taskbar {
  display: flex;
  align-items: center;
  height: 40px;
  border-top: 1px solid #37495c;
  background: linear-gradient(90deg, #8a9bb3 0, #8fa3bd 5%, #a5c2df 20%, #a5c2df 62%, #8296b0 65%, #8296b0);
  color: #fff;
}
.start { padding-left: 5px; }
.start svg { width: 28px; height: 36px; }
.dots { width: 7px; height: 30px; margin-left: 8px; background: radial-gradient(circle, #45566d 1px, transparent 1px) 0 0 / 3px 4px; }
.tray-dots { margin: 0 7px 0 auto; }
.tasks { display: flex; gap: 2px; height: 39px; margin-left: 6px; }
.tasks button {
  width: 43px;
  border: 1px solid #5f7791;
  border-radius: 3px;
  background: linear-gradient(135deg, #d2dfeb, #a9c0d8);
  box-shadow: inset 0 0 0 1px #d4e2ee;
}
.tasks .active { background: linear-gradient(135deg, #f3f6f9, #cddae7); }
.tasks svg { width: 28px; height: 34px; margin: auto; }
.tasks .active svg { width: 24px; height: 32px; }
.lang { width: 14px; padding-bottom: 6px; }
.tray { display: flex; justify-content: space-between; width: 321px; }
.tray svg { width: 14px; height: 20px; }
.clock { display: flex; flex-direction: column; gap: 4px; width: 54px; text-align: center; }
.show-desktop { width: 11px; height: 39px; border: 1px solid #52647c; background: linear-gradient(90deg, #71859f, #a7b8cc); }
```
